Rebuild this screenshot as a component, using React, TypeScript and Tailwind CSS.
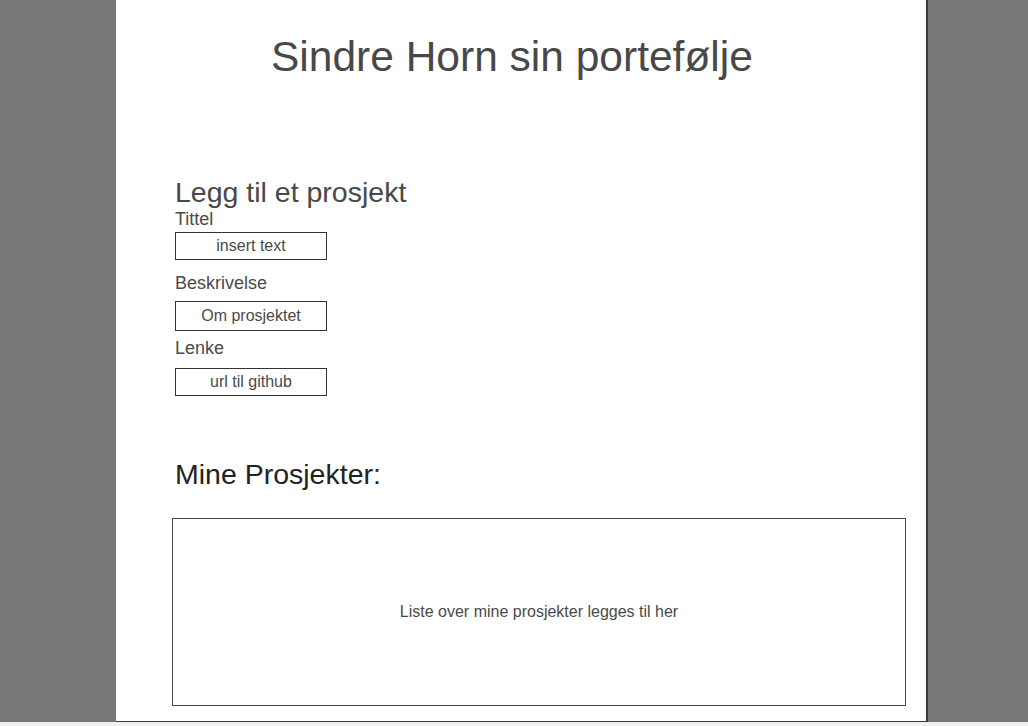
import React from 'react';

const fields = [
  { label: 'Tittel', placeholder: 'insert text', labelGap: 'mt-[4px]', boxGap: 'mt-[4px]', boxH: 'h-[28px]' },
  { label: 'Beskrivelse', placeholder: 'Om prosjektet', labelGap: 'mt-[14px]', boxGap: 'mt-[9px]', boxH: 'h-[30px]' },
  { label: 'Lenke', placeholder: 'url til github', labelGap: 'mt-[8px]', boxGap: 'mt-[11px]', boxH: 'h-[28px]' },
];

export default function App() {
  return (
    <div className="flex h-[726px] w-full flex-col bg-[#f0f0f0] font-['Liberation_Sans',Arial,sans-serif]">
      <div className="flex h-[722px] w-full bg-[#777777]">
        <div className="w-[116px] shrink-0" />
        <main className="flex h-[722px] w-[812px] shrink-0 flex-col border-r-2 border-b border-[#3a3a3a] bg-white">
          <h1 className="mt-[36px] pl-[155px] text-[42.5px] leading-[42px] text-[#484848]">
            Sindre Horn sin portefølje
          </h1>

          <section className="mt-[100px] flex flex-col pl-[59px]">
            <h2 className="text-[28.5px] leading-[28px] text-[#484848]">Legg til et prosjekt</h2>
            {fields.map(f => (
              <div key={f.label} className="flex flex-col">
                <label className={`${f.labelGap} text-[18px] leading-none text-[#4a4a4a]`}>{f.label}</label>
                <div
                  className={`${f.boxGap} ${f.boxH} flex w-[152px] items-center justify-center border border-[#333333] text-[16px] text-[#4a4a4a]`}
                >
                  {f.placeholder}
                </div>
              </div>
            ))}
          </section>

          <section className="mt-[64px] flex flex-col">
            <h2 className="pl-[59px] text-[28.5px] leading-[28px] text-[#222222]">Mine Prosjekter:</h2>
            <div className="mt-[30px] ml-[56px] flex h-[188px] w-[734px] items-center justify-center border border-[#444444] text-[16px] text-[#4a4a4a]">
              Liste over mine prosjekter legges til her
            </div>
          </section>
        </main>
        <div className="flex-1" />
      </div>
    </div>
  );
}
